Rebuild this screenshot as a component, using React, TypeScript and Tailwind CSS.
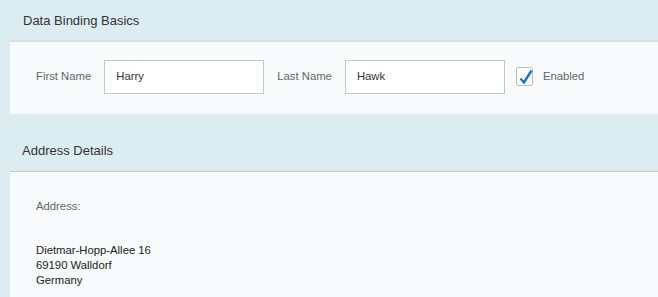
import React from 'react';

function Check() {
  return (
    <span className="relative inline-flex h-[19px] w-[17px] items-center justify-center rounded-[2px] border border-[#b8bcbd] bg-white">
      <svg width="14" height="16" viewBox="0 0 14 16" className="absolute left-[2px] top-[1px]">
        <path d="M1.5 9.5 L5 13.5 L12.5 1.5" fill="none" stroke="#1474c6" strokeWidth="2.4" strokeLinejoin="miter" />
      </svg>
    </span>
  );
}

export default function App() {
  return (
    <div className="flex h-[297px] w-[658px] flex-col overflow-hidden bg-[#dcedf1] font-['Liberation_Sans',Arial,sans-serif] text-[#333]">
      {/* Data Binding Basics */}
      <div className="flex h-[40px] items-center pl-[23px] pt-[1px] text-[13px] text-[#333]">Data Binding Basics</div>
      <div className="ml-[10px] flex h-[75px] items-center border-t-2 border-b border-t-[#d4e1e4] border-b-[#e3ecee] bg-[#f7fbfc] pb-[3px] pl-[26px] text-[11.3px]">
        <span className="text-[#666]">First Name</span>
        <div className="ml-[13px] flex h-[34px] w-[160px] items-center border border-[#c3c7c9] bg-white pl-[11px] text-[#333]">Harry</div>
        <span className="ml-[13px] text-[#666]">Last Name</span>
        <div className="ml-[13px] flex h-[34px] w-[160px] items-center border border-[#c3c7c9] bg-white pl-[11px] text-[#333]">Hawk</div>
        <span className="ml-[11px] flex"><Check /></span>
        <span className="ml-[10px] text-[#666]">Enabled</span>
      </div>

      {/* Address Details */}
      <div className="mt-[15px] flex h-[41px] items-center pl-[22px] pt-[1px] text-[13px] text-[#333]">Address Details</div>
      <div className="ml-[10px] flex-1 border-t border-[#bfc8ca] bg-[#f7fbfc] pl-[26px] pt-[26px] text-[11.3px]">
        <div className="text-[#666]">Address:</div>
        <div className="mt-[28px] leading-[15px] text-[#222]">
          <div>Dietmar-Hopp-Allee 16</div>
          <div>69190 Walldorf</div>
          <div>Germany</div>
        </div>
      </div>
    </div>
  );
}
